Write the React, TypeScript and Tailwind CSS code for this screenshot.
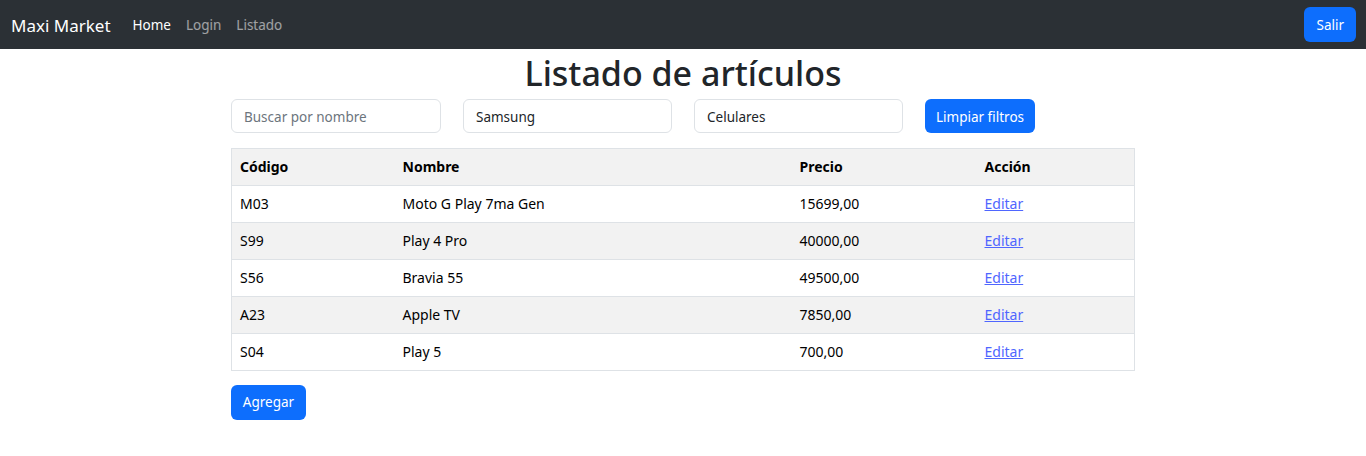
const rows = [
  { codigo: "M03", nombre: "Moto G Play 7ma Gen", precio: "15699,00" },
  { codigo: "S99", nombre: "Play 4 Pro", precio: "40000,00" },
  { codigo: "S56", nombre: "Bravia 55", precio: "49500,00" },
  { codigo: "A23", nombre: "Apple TV", precio: "7850,00" },
  { codigo: "S04", nombre: "Play 5", precio: "700,00" },
];

const inputCls =
  "h-[34px] px-3 pt-[2px] text-[13.5px] text-[#212529] border border-[#dee2e6] rounded-md bg-white outline-none placeholder:text-[#6c757d]";

const App = () => {
  return (
    <div className="min-h-[456px] bg-white font-['Noto_Sans',sans-serif] text-[#212529]">
      <nav className="h-[49px] bg-[#2b3035] flex items-center justify-between pl-[11px] pr-[10px]">
        <div className="flex items-center pt-[2px]">
          <span className="text-[17px] text-white mr-[22px]">Maxi Market</span>
          <div className="flex items-center gap-[15px] text-[13.5px]">
            <a className="text-white">Home</a>
            <a className="text-white/55">Login</a>
            <a className="text-white/55">Listado</a>
          </div>
        </div>
        <button className="h-[35px] px-[12px] pt-[1px] rounded-md bg-[#0d6efd] text-white text-[13.5px]">Salir</button>
      </nav>

      <div className="w-[904px] mx-auto">
        <h1 className="text-[34px] font-medium leading-[48px] text-center text-[#212529]">Listado de artículos</h1>
        <div className="flex items-center gap-[22px] mt-[2px]">
          <input className={`${inputCls} w-[210px]`} placeholder="Buscar por nombre" />
          <input className={`${inputCls} w-[209px]`} defaultValue="Samsung" />
          <input className={`${inputCls} w-[209px]`} defaultValue="Celulares" />
          <button className="h-[34px] w-[110px] pt-[2px] rounded-md bg-[#0d6efd] text-white text-[13.5px]">Limpiar filtros</button>
        </div>

        <table className="w-full mt-[15px] border-collapse border border-[#dee2e6] text-[14px] text-black">
          <thead>
            <tr className="bg-[#f2f2f2] h-[37px] text-left">
              <th className="w-[163px] px-2 pb-[2px] font-bold">Código</th>
              <th className="w-[397px] px-2 pb-[2px] font-bold">Nombre</th>
              <th className="w-[185px] px-2 pb-[2px] font-bold">Precio</th>
              <th className="px-2 pb-[2px] font-bold">Acción</th>
            </tr>
          </thead>
          <tbody>
            {rows.map((r, i) => (
              <tr key={r.codigo} className={`h-[37px] border-t border-[#dee2e6] ${i % 2 === 1 ? "bg-[#f2f2f2]" : "bg-white"}`}>
                <td className="px-2 pb-[2px]">{r.codigo}</td>
                <td className="px-2 pb-[2px]">{r.nombre}</td>
                <td className="px-2 pb-[2px]">{r.precio}</td>
                <td className="px-2 pb-[2px]">
                  <a className="text-[#4f66ff] underline cursor-pointer">Editar</a>
                </td>
              </tr>
            ))}
          </tbody>
        </table>

        <button className="mt-[14px] h-[35px] w-[75px] rounded-md bg-[#0d6efd] text-white text-[13.5px]">Agregar</button>
      </div>
    </div>
  );
};

export default App;
